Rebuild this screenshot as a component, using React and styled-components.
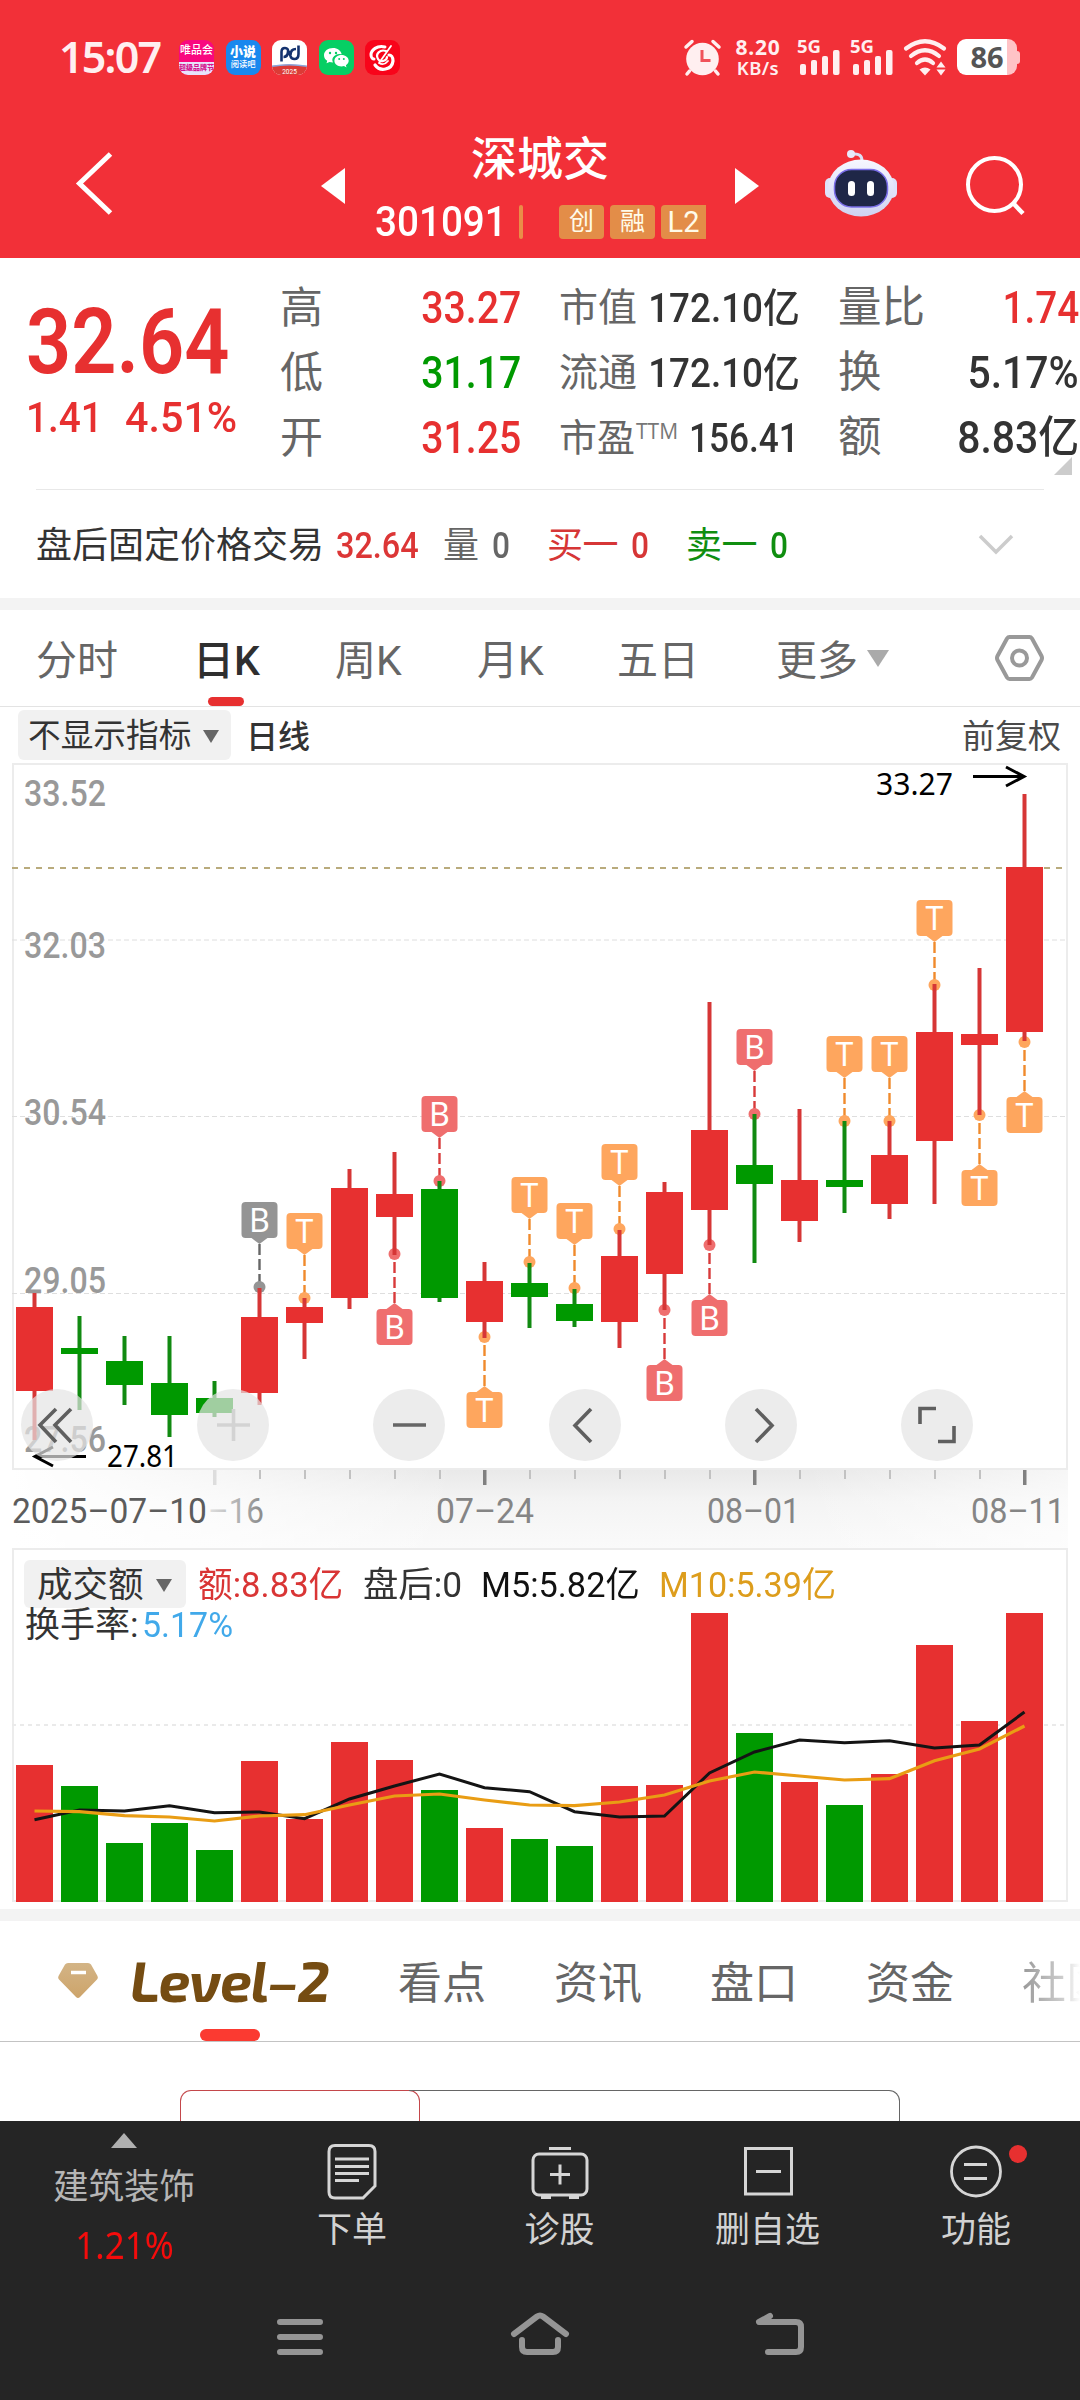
import React from "react";
import styled, { createGlobalStyle } from "styled-components";

const RED = "#e73030";
const GREEN = "#009900";

const GlobalStyle = createGlobalStyle`
  * {
    box-sizing: border-box;
  }
  body {
    margin: 0;
    background: #fff;
    font-family: Roboto, "Noto Sans CJK SC", sans-serif;
    color: #333;
  }
  svg {
    display: block;
    flex: none;
    overflow: visible;
  }
`;

const Screen = styled.div`
  width: 1080px;
  height: 2400px;
  display: flex;
  flex-direction: column;
  overflow: hidden;
  background: #fff;
`;

/* fixed-width slot, the text in it is condensed from one edge */
const Slot = styled.div`
  display: flex;
  flex: none;
  justify-content: ${({ $right }) => ($right ? "flex-end" : "flex-start")};
  width: ${({ $w }) => ($w ? `${$w}px` : "auto")};
  margin-left: ${({ $ml }) => $ml || 0}px;
`;

const Label = styled.span`
  font-size: ${({ $size }) => $size || 36}px;
  font-weight: ${({ $weight }) => $weight || 400};
  color: ${({ $color }) => $color || "#333"};
  line-height: 1.2;
  letter-spacing: ${({ $ls }) => $ls || 0}px;
  white-space: nowrap;
`;

const Num = styled(Label)`
  display: inline-block;
  transform: scaleX(${({ $k }) => $k || 0.88});
  transform-origin: ${({ $right }) => ($right ? "right" : "left")} center;
`;

/* ---------- header ---------- */

const Header = styled.header`
  height: 258px;
  flex: none;
  background: #f23038;
  color: #fff;
`;

const StatusBar = styled.div`
  height: 114px;
  display: flex;
  align-items: center;
  padding: 0 63px 0 59px;
`;

const Clock = styled.div`
  width: 120px;
  font: 600 43px/50px "Noto Sans", sans-serif;
  letter-spacing: -1.8px;
  color: #ffeff0;
`;

const AppIcons = styled.div`
  display: flex;
  gap: 11.6px;
  flex: 1;
`;

const AppIcon = styled.div`
  width: 35px;
  height: 35px;
  border-radius: 9px;
  overflow: hidden;
  background: ${({ $bg }) => $bg};
  display: flex;
  flex-direction: column;
  align-items: center;
  justify-content: center;
  color: #fff;
`;

const IconLine = styled.span`
  font-size: ${({ $size }) => $size}px;
  line-height: ${({ $lh }) => $lh}px;
  font-weight: ${({ $weight }) => $weight || 400};
  color: ${({ $color }) => $color || "#fff"};
  background: ${({ $bg }) => $bg || "none"};
  width: 100%;
  text-align: center;
  white-space: nowrap;
`;

const Speed = styled.div`
  width: 50px;
  margin: 0 14px 0 12px;
  display: flex;
  flex-direction: column;
  align-items: center;
  font: 700 21px/21px "Noto Sans", sans-serif;
  color: #ffeff0;
  letter-spacing: 0.8px;
`;

const SpeedUnit = styled.span`
  font-size: 18.5px;
  line-height: 20px;
  font-weight: 600;
  letter-spacing: 0.4px;
`;

const Battery = styled.div`
  position: relative;
  width: 60px;
  height: 36px;
  margin-left: 9px;
  border-radius: 9px;
  background: linear-gradient(to right, #fff 50px, #ffc3c6 50px);
  font: 700 29px/36px "Noto Sans", sans-serif;
  color: #555;
  text-align: center;
  &:after {
    content: "";
    position: absolute;
    right: -3px;
    top: 12px;
    width: 3px;
    height: 13px;
    border-radius: 0 3px 3px 0;
    background: #ffc3c6;
  }
`;

const NavBar = styled.div`
  height: 144px;
  display: grid;
  grid-template-columns: 321px 24px 390px 24px 66px 72px 69px 1fr;
  align-items: center;
`;

const TitleBlock = styled.div`
  display: flex;
  flex-direction: column;
  align-items: center;
  height: 144px;
  padding-top: 17px;
`;

const Title = styled.div`
  font-size: 46px;
  font-weight: 500;
  line-height: 56px;
`;

const CodeRow = styled.div`
  display: flex;
  align-items: center;
  width: 100%;
  height: 34px;
  margin-top: 18px;
  padding-left: 30px;
`;

const CodeMark = styled.i`
  width: 4px;
  height: 34px;
  border-radius: 2px;
  background: #ea8d48;
  margin-right: 36px;
`;

const Badge = styled.span`
  width: 45px;
  height: 34px;
  margin-right: 6px;
  border-radius: ${({ $cut }) => ($cut ? "4px 0 0 4px" : "4px")};
  background: #e38d48;
  color: #fffbe9;
  font-size: ${({ $size }) => $size || 25}px;
  line-height: 34px;
  text-align: center;
`;

/* ---------- quote ---------- */

const Quote = styled.section`
  position: relative;
  display: flex;
  height: 231px;
  flex: none;
`;

const PriceBlock = styled.div`
  width: 280px;
  flex: none;
  padding: 40px 0 0 26px;
`;

const Price = styled.div`
  height: 90px;
  display: flex;
  align-items: center;
`;

const Change = styled.div`
  height: 60px;
  display: flex;
  align-items: center;
`;

const StatColumn = styled.div`
  width: 241px;
  margin-right: 38px;
  flex: none;
  padding-top: 18px;
`;

const StatRow = styled.div`
  height: 65px;
  display: flex;
  align-items: center;
  justify-content: space-between;
`;

const Sup = styled.span`
  font: 400 21px/20px "Open Sans", sans-serif;
  color: #777;
  margin: 5px 0 0 1px;
`;

const Corner = styled.i`
  position: absolute;
  right: 8px;
  bottom: 14px;
  border-bottom: 18px solid #ccc;
  border-left: 18px solid transparent;
`;

const AfterHours = styled.div`
  height: 109px;
  flex: none;
  display: flex;
  align-items: center;
  margin: 0 36px;
  padding-top: 6px;
  border-top: 1px solid #e8e8e8;
  width: 1008px;
`;

const Band = styled.div`
  height: 12px;
  flex: none;
  background: #f3f3f3;
`;

/* ---------- period tabs ---------- */

const Tabs = styled.nav`
  height: 97px;
  flex: none;
  display: flex;
  align-items: center;
  padding: 0 36px;
  border-bottom: 1px solid #e3e3e3;
`;

const Tab = styled.div`
  position: relative;
  width: ${({ $w }) => $w}px;
  height: 96px;
  padding-top: 3px;
  font-size: 41px;
  line-height: 96px;
  white-space: nowrap;
  color: ${({ $active }) => ($active ? "#2f2f2f" : "#666")};
  font-weight: ${({ $active }) => ($active ? 500 : 400)};
  &:after {
    content: "";
    display: ${({ $active }) => ($active ? "block" : "none")};
    position: absolute;
    left: 15px;
    bottom: 0;
    width: 36px;
    height: 9px;
    border-radius: 5px;
    background: ${RED};
  }
`;

const Caret = styled.i`
  flex: none;
  border-top: ${({ $h }) => $h}px solid ${({ $color }) => $color || "#666"};
  border-left: ${({ $h }) => $h * 0.68}px solid transparent;
  border-right: ${({ $h }) => $h * 0.68}px solid transparent;
`;

const More = styled.div`
  display: flex;
  align-items: center;
  flex: 1;
`;

const IndicatorRow = styled.div`
  height: 56px;
  flex: none;
  display: flex;
  align-items: center;
  padding: 0 19px 0 18px;
`;

const Pill = styled.div`
  display: flex;
  align-items: center;
  justify-content: space-between;
  width: ${({ $w }) => $w}px;
  height: ${({ $h }) => $h}px;
  padding: 3px ${({ $pr }) => $pr}px 0 ${({ $pl }) => $pl}px;
  border-radius: 6px;
  background: #f1f1f1;
`;

const RowText = styled(Label)`
  padding-top: 4px;
`;

const Spacer = styled.div`
  flex: 1;
`;

/* ---------- charts ---------- */

const KlinePanel = styled.section`
  position: relative;
  height: 785px;
  flex: none;
`;

const Controls = styled.div`
  position: absolute;
  left: 21px;
  top: 626px;
  display: flex;
  gap: 104px;
`;

const RoundButton = styled.div`
  width: 72px;
  height: 72px;
  border-radius: 50%;
  background: rgba(228, 228, 228, 0.7);
`;

const VolumePanel = styled.section`
  position: relative;
  height: 361px;
  flex: none;
`;

const Legend = styled.div`
  position: absolute;
  left: 24px;
  top: 12px;
`;

const LegendRow = styled.div`
  display: flex;
  align-items: center;
  height: ${({ $h }) => $h}px;
`;

const LegendItems = styled.div`
  display: flex;
  padding-top: 3px;
`;

/* ---------- lower tabs ---------- */

const InfoTabs = styled.nav`
  height: 121px;
  flex: none;
  display: flex;
  align-items: center;
  padding-left: 57px;
  border-bottom: 1px solid #c3c3c3;
  overflow: hidden;
`;

const LevelTab = styled.div`
  position: relative;
  width: 268px;
  flex: none;
  height: 120px;
  margin-left: 31px;
  padding-bottom: 5px;
  display: flex;
  align-items: center;
  &:after {
    content: "";
    position: absolute;
    left: 70px;
    bottom: 0;
    width: 60px;
    height: 12px;
    border-radius: 6px;
    background: #fb3a31;
  }
`;

const LevelText = styled.span`
  display: inline-block;
  font: italic 700 57px/70px "Exo 2", Inter, sans-serif;
  letter-spacing: -1px;
  color: #754c12;
  transform: scaleX(0.985);
  transform-origin: left center;
  white-space: nowrap;
`;

const InfoTab = styled.div`
  width: 156px;
  flex: none;
  padding-top: 5px;
  font-size: 44px;
  line-height: 60px;
  color: #666;
  white-space: nowrap;
`;

const FadingTab = styled(InfoTab)`
  width: 92px;
  background: linear-gradient(to right, #999 0, #ccc 40px, #fff 58px);
  background-clip: text;
  -webkit-background-clip: text;
  color: transparent;
`;

const Segments = styled.div`
  display: flex;
  height: 31px;
  flex: none;
  margin: 48px 180px 0;
`;

const Segment = styled.div`
  width: ${({ $active }) => ($active ? 240 : 480)}px;
  border: 1px solid ${({ $active }) => ($active ? "#c4474b" : "#666")};
  border-bottom: none;
  border-left-width: ${({ $active }) => ($active ? 1 : 0)}px;
  border-radius: ${({ $active }) => ($active ? "11px 11px 0 0" : "0 11px 0 0")};
  margin-left: ${({ $active }) => ($active ? 0 : -11)}px;
  flex-grow: ${({ $active }) => ($active ? 0 : 1)};
`;

/* ---------- bottom ---------- */

const Footer = styled.footer`
  height: 279px;
  flex: none;
  background: #252525;
`;

const Actions = styled.div`
  height: 158px;
  display: grid;
  grid-template-columns: 248px 208px 207px 209px 208px;
`;

const Action = styled.div`
  position: relative;
  display: flex;
  flex-direction: column;
  align-items: center;
  padding-top: 20px;
  font-size: 35px;
  line-height: 40px;
  color: #d2d2d2;
`;

const ActionLabel = styled.span`
  margin-top: 8px;
`;

const Sector = styled.div`
  display: flex;
  flex-direction: column;
  align-items: center;
  padding-top: 12px;
`;

const SectorArrow = styled.i`
  border-bottom: 15px solid #b0b0b0;
  border-left: 13.5px solid transparent;
  border-right: 13.5px solid transparent;
`;

const SectorName = styled.div`
  margin-top: 19px;
  font-size: 35.5px;
  line-height: 40px;
  color: #b5b5b5;
`;

const SectorChange = styled.div`
  margin-top: 16px;
  font: 400 38px/42px "Noto Sans", sans-serif;
  color: #f40c0c;
  transform: scaleX(0.92);
`;

const Dot = styled.i`
  position: absolute;
  left: 137px;
  top: 24px;
  width: 18px;
  height: 18px;
  border-radius: 50%;
  background: ${RED};
`;

const SystemNav = styled.div`
  display: flex;
  justify-content: center;
  align-items: center;
  gap: 180px;
  height: 108px;
`;

// body top, body bottom, high, low, up
const candles = [
  [1307, 1391, 1293, 1440, 1],
  [1348, 1354, 1316, 1410, 0],
  [1361, 1385, 1336, 1405, 0],
  [1383, 1415, 1336, 1437, 0],
  [1398, 1413, 1381, 1417, 0],
  [1317, 1393, 1288, 1405, 1],
  [1307, 1323, 1298, 1359, 1],
  [1188, 1298, 1169, 1309, 1],
  [1194, 1217, 1152, 1255, 1],
  [1189, 1298, 1181, 1302, 0],
  [1281, 1322, 1262, 1338, 1],
  [1283, 1297, 1263, 1328, 0],
  [1304, 1321, 1289, 1327, 0],
  [1256, 1322, 1230, 1348, 1],
  [1192, 1274, 1182, 1310, 1],
  [1130, 1210, 1002, 1245, 1],
  [1165, 1184, 1114, 1263, 0],
  [1180, 1221, 1109, 1242, 1],
  [1180, 1187, 1121, 1213, 0],
  [1155, 1204, 1121, 1219, 1],
  [1032, 1141, 984, 1204, 1],
  [1034, 1045, 968, 1115, 1],
  [867, 1032, 794, 1041, 1],
];

const tones = {
  grey: ["#949494", "#666"],
  red: ["#ef6e6e", "#d83a3a"],
  orange: ["#fea65e", "#f08a2c"],
};

// candle index, letter, tone, anchor y, side
const marks = [
  [5, "B", "grey", 1287, "up"],
  [6, "T", "orange", 1298, "up"],
  [8, "B", "red", 1254, "down"],
  [9, "B", "red", 1181, "up"],
  [10, "T", "orange", 1337, "down"],
  [11, "T", "orange", 1262, "up"],
  [12, "T", "orange", 1288, "up"],
  [13, "T", "orange", 1229, "up"],
  [14, "B", "red", 1310, "down"],
  [15, "B", "red", 1245, "down"],
  [16, "B", "red", 1114, "up"],
  [18, "T", "orange", 1121, "up"],
  [19, "T", "orange", 1121, "up"],
  [20, "T", "orange", 985, "up"],
  [21, "T", "orange", 1115, "down"],
  [22, "T", "orange", 1042, "down"],
];

const prices = [
  ["33.52", 806],
  ["32.03", 957.5],
  ["30.54", 1125],
  ["29.05", 1293],
  ["27.56", 1452],
];

const dates = [
  ["07–24", 436, 98],
  ["08–01", 707, 93],
  ["08–11", 971, 94],
];

const volumes = [
  1765, 1786, 1843, 1823, 1850, 1761, 1819, 1742, 1760, 1790, 1828, 1839, 1846,
  1786, 1785, 1613, 1733, 1782, 1805, 1774, 1645, 1721, 1613,
];
const ma5 = [
  1819.7, 1810, 1811, 1805.7, 1812.7, 1812, 1818.7, 1799, 1786, 1774, 1787.7,
  1791.7, 1811.7, 1817, 1816, 1773, 1752, 1740, 1742.7, 1740.7, 1748, 1745, 1712,
];
const ma10 = [
  1811, 1811.7, 1815.7, 1817, 1821, 1816, 1814.7, 1805, 1796, 1794, 1800, 1805,
  1805.7, 1802, 1795, 1781, 1772, 1776, 1780, 1778.7, 1760.7, 1749, 1726,
];

const cx = (i) => 34.5 + 45 * i;
const points = (ys) => ys.map((y, i) => `${cx(i)},${y}`).join(" ");

const Mark = ({ index, letter, tone, y, side }) => {
  const [fill, line] = tones[tone];
  const x = cx(index);
  const up = side === "up";
  const top = up ? y - 85 : y + 55;
  const edge = up ? top + 36 : top;
  const tip = up ? edge + 6 : edge - 6;
  return (
    <g>
      <line x1={x} x2={x} y1={tip} y2={y} stroke={line} strokeWidth="2.4" strokeDasharray="11 4" />
      <rect x={x - 18} y={top} width="36" height="36" rx="4" fill={fill} />
      <path d={`M${x - 8} ${edge}L${x} ${tip}L${x + 8} ${edge}Z`} fill={fill} />
      <circle cx={x} cy={y} r="6" fill={fill} />
      <text
        x={x}
        y={top + 30}
        fill="#fff"
        fontSize="32"
        fontFamily="Noto Sans"
        textAnchor="middle"
      >
        {letter}
      </text>
    </g>
  );
};

const Kline = () => (
  <svg width="1080" height="785" viewBox="0 763 1080 785">
    <defs>
      <linearGradient id="axisY" x1="0" x2="0" y1="0" y2="1">
        <stop offset="0" stopColor="#e9e9e9" />
        <stop offset="0.4" stopColor="#f4f4f4" />
        <stop offset="1" stopColor="#fafafa" />
      </linearGradient>
      <linearGradient id="axisX">
        <stop offset="0" stopColor="#fff" />
        <stop offset="0.2" stopColor="#fff" stopOpacity="0.6" />
        <stop offset="0.42" stopColor="#fff" stopOpacity="0" />
        <stop offset="0.75" stopColor="#fff" stopOpacity="0" />
        <stop offset="1" stopColor="#fff" stopOpacity="0.6" />
      </linearGradient>
      <linearGradient id="dateFade" gradientUnits="userSpaceOnUse" x1="200" x2="262" y1="0" y2="0">
        <stop offset="0" stopColor="#eee" />
        <stop offset="1" stopColor="#8c8c8c" />
      </linearGradient>
    </defs>
    <rect x="12" y="1470" width="1056" height="78" fill="url(#axisY)" />
    <rect x="12" y="1470" width="1056" height="78" fill="url(#axisX)" />
    <rect x="13" y="764" width="1054" height="705" fill="none" stroke="#ececec" strokeWidth="2" />
    {[940, 1116.5, 1293.5].map((y) => (
      <line key={y} x1="12" x2="1066" y1={y} y2={y} stroke="#dedede" strokeDasharray="5 3" />
    ))}
    <line x1="12" x2="1064" y1="868" y2="868" stroke="#b9ab7c" strokeWidth="2" strokeDasharray="6 6" />
    {prices.map(([text, y]) => (
      <text
        key={text}
        x="24"
        y={y}
        fill="#999"
        fontSize="36"
        fontWeight="500"
        textLength="82"
        lengthAdjust="spacingAndGlyphs"
      >
        {text}
      </text>
    ))}
    {marks.map(([index, letter, tone, y, side]) => (
      <Mark key={index} index={index} letter={letter} tone={tone} y={y} side={side} />
    ))}
    {candles.map(([top, bottom, high, low, up], i) => (
      <g key={i} fill={up ? RED : GREEN}>
        <rect x={cx(i) - 2} y={high} width="4" height={low - high} fill={up ? "#d63636" : "#118a11"} />
        <rect x={cx(i) - 18.5} y={top} width="37" height={bottom - top} />
      </g>
    ))}
    <g fontFamily="Noto Sans" fontSize="31" fill="#000">
      <text x="876" y="795" textLength="77" lengthAdjust="spacingAndGlyphs">
        33.27
      </text>
      <text x="107" y="1467" textLength="71" lengthAdjust="spacingAndGlyphs">
        27.81
      </text>
    </g>
    <g stroke="#000" strokeWidth="3" fill="none">
      <path d="M973 776.5H1024M1006 767L1024 776.5L1006 786" />
      <path d="M86 1456.5H35M53 1447L35 1456.5L53 1466" />
    </g>
    {candles.map((c, i) => {
      if (i < 4) return null;
      const major = (i - 4) % 6 === 0;
      return (
        <rect
          key={i}
          x={cx(i) - (major ? 1.5 : 0.5)}
          y="1470"
          width={major ? 3.5 : 2}
          height={major ? 15 : 9}
          fill={i === 4 ? "#ddd" : major ? "#808080" : "#c2c2c2"}
        />
      );
    })}
    <g fontSize="35" fill="#858585">
      <text x="208" y="1523" fill="url(#dateFade)" textLength="56" lengthAdjust="spacingAndGlyphs">
        –16
      </text>
      {dates.map(([text, x, w]) => (
        <text key={text} x={x} y="1523" textLength={w} lengthAdjust="spacingAndGlyphs">
          {text}
        </text>
      ))}
      <text
        x="12"
        y="1523"
        fill="#5c5c5c"
        textLength="195"
        lengthAdjust="spacingAndGlyphs"
      >
        2025–07–10
      </text>
    </g>
  </svg>
);

const buttonIcons = [
  ["M35 20L19 36L35 53M50 20L34 36L50 53", "#5f5f5f"],
  ["M20 36H53M36.5 20V52", "#d3d3d3"],
  ["M20 36H53", "#666"],
  ["M42 20L26 36.5L42 53", "#5f5f5f"],
  ["M31 20L47 36.5L31 53", "#5f5f5f"],
  ["M19 35V19.5H35M37 52.5H53V37", "#5f5f5f"],
];

const Volume = () => (
  <svg width="1080" height="361" viewBox="0 1548 1080 361">
    <rect x="13" y="1549" width="1054" height="352" fill="none" stroke="#ececec" strokeWidth="2" />
    <line x1="12" x2="1066" y1="1725" y2="1725" stroke="#eaeaea" strokeWidth="2" strokeDasharray="4 4" />
    {volumes.map((y, i) => (
      <rect
        key={i}
        x={cx(i) - 18.5}
        y={y}
        width="37"
        height={1902 - y}
        fill={candles[i][4] ? RED : GREEN}
      />
    ))}
    <polyline points={points(ma5)} fill="none" stroke="#141414" strokeWidth="3" />
    <polyline points={points(ma10)} fill="none" stroke="#e99d14" strokeWidth="3.2" />
  </svg>
);

const Signal = () => (
  <svg width="53" height="36" viewBox="0 0 53 36" fill="#ffeff0">
    <text x="0" y="14" fontFamily="Noto Sans" fontWeight="700" fontSize="18.5">
      5G
    </text>
    <rect x="3" y="25" width="6" height="11" rx="2" />
    <rect x="14" y="21" width="6" height="15" rx="2" />
    <rect x="25" y="17" width="6" height="19" rx="2" />
    <rect x="36" y="11" width="6.5" height="25" rx="2" />
  </svg>
);

const App = () => (
  <>
    <GlobalStyle />
    <Screen>
      <Header>
        <StatusBar>
          <Clock>15:07</Clock>
          <AppIcons>
            <AppIcon $bg="#f9087f">
              <IconLine $size={11} $lh={22} $weight={500}>唯品会</IconLine>
              <IconLine $size={7} $lh={13} $weight={900} $bg="#e7e3fb" $color="#d5148f">超级品牌节</IconLine>
            </AppIcon>
            <AppIcon $bg="#1988ee">
              <IconLine $size={13} $lh={15} $weight={900}>小说</IconLine>
              <IconLine $size={8.3} $lh={11} $weight={500}>阅读吧</IconLine>
            </AppIcon>
            <AppIcon $bg="#fff">
              <svg width="35" height="35" viewBox="0 0 35 35">
                <path d="M0 26Q17 23 35 26V35H0Z" fill="#dc3b36" />
                <path d="M0 25.5Q17 22.5 35 25.5V27Q17 24 0 27Z" fill="#8aa7dd" />
                <path
                  d="M9.500 21.500V12Q9.500 8 13 8Q16.500 8 16 12Q15.500 17 11.500 17M26.500 5.500V14Q26.500 19 22.500 19Q19 19 18.500 16L16.500 11M18.500 15Q18.500 9 24 9"
                  fill="none"
                  stroke="#14326e"
                  strokeWidth="2.600"
                />
                <text x="17.5" y="33.5" fontSize="6.5" fill="#fff" textAnchor="middle">
                  2025
                </text>
              </svg>
            </AppIcon>
            <AppIcon $bg="#06cf64">
              <svg width="35" height="35" viewBox="0 0 35 35" fill="#fff">
                <path d="M14 8C8.8 8 5 11.200 5 15.300C5 17.600 6.200 19.500 8.200 20.800L7.500 23.300L10.500 21.900C11.600 22.200 12.700 22.400 14 22.400A7 6 0 0 1 22.700 14.300C22 10.600 18.400 8 14 8Z" />
                <path d="M22.500 15C18.500 15 15.400 17.600 15.400 20.800C15.400 24 18.500 26.500 22.500 26.500C23.400 26.500 24.200 26.400 25 26.100L27.500 27.400L26.900 25.200C28.600 24.200 29.700 22.600 29.700 20.800C29.700 17.600 26.500 15 22.500 15Z" />
                <g fill="#06cf64">
                  <circle cx="11" cy="13" r="1.200" />
                  <circle cx="17" cy="13" r="1.200" />
                  <circle cx="20.200" cy="19" r="1" />
                  <circle cx="24.800" cy="19" r="1" />
                </g>
              </svg>
            </AppIcon>
            <AppIcon $bg="#f8041a">
              <svg width="35" height="35" viewBox="0 0 35 35" fill="none" stroke="#fff" strokeLinecap="round">
                <path d="M20 7C12 5 6 10 6 15C6 18 8 19 9 19" strokeWidth="3" />
                <path d="M10 25C15 32 27 30 28 21C28 17 26 15 24 15" strokeWidth="3.200" />
                <path d="M21 11C15 9 10 14 13 19C15 23 22 21 22 17" strokeWidth="2.200" />
                <path d="M26 6L14 23M14 23Q19 26 23 21" strokeWidth="1.800" />
              </svg>
            </AppIcon>
          </AppIcons>
          <svg width="37" height="37" viewBox="0 0 37 37">
            <circle cx="18.500" cy="20" r="16.300" fill="#ffeff0" />
            <path d="M2 8L8 2.500M35 8L29 2.500M5.500 32L3 35M31.500 32L34 35" stroke="#ffeff0" strokeWidth="3.500" strokeLinecap="round" />
            <path d="M18 11V21.500H26.500" stroke="#f0525a" strokeWidth="3" fill="none" />
          </svg>
          <Speed>
            8.20
            <SpeedUnit>KB/s</SpeedUnit>
          </Speed>
          <Signal />
          <Signal />
          <svg width="45" height="37" viewBox="0 0 45 37" fill="none" stroke="#ffeff0" strokeLinecap="round">
            <path d="M3 9.500Q22 -5 41 9.500" strokeWidth="4.200" />
            <path d="M8 17Q22 5.500 36 17" strokeWidth="4.200" />
            <path d="M14 24Q22 17 30 24" strokeWidth="4.200" />
            <path d="M16.500 30.500Q22 26.500 27.500 30.500L22 36.500Z" fill="#ffeff0" stroke="none" />
            <path d="M38 22.500L42.500 28.500H33.500ZM38 36.500L42.500 30.500H33.500Z" fill="#ffeff0" stroke="none" />
          </svg>
          <Battery>86</Battery>
        </StatusBar>
        <NavBar>
          <svg width="120" height="72" viewBox="0 150 120 72">
            <path d="M110.500 154L79.500 183.500L110.500 213" fill="none" stroke="#fff" strokeWidth="5" />
          </svg>
          <svg width="24" height="36" viewBox="0 0 24 36" fill="#fff">
            <path d="M24 0V36L0 18Z" />
          </svg>
          <TitleBlock>
            <Title>深城交</Title>
            <CodeRow>
              <Slot $w={144}>
                <Num $size={42} $weight={500} $color="#fff" $k={0.92}>301091</Num>
              </Slot>
              <CodeMark />
              <Badge>创</Badge>
              <Badge>融</Badge>
              <Badge $size={29} $cut>L2</Badge>
            </CodeRow>
          </TitleBlock>
          <svg width="24" height="36" viewBox="0 0 24 36" fill="#fff">
            <path d="M0 0V36L24 18Z" />
          </svg>
          <span />
          <svg width="72" height="76" viewBox="0 4 72 76">
            <defs>
              <linearGradient id="shell" x1="0" x2="0" y1="0" y2="1">
                <stop offset="0" stopColor="#f6f7ff" />
                <stop offset="1" stopColor="#cfd2f2" />
              </linearGradient>
            </defs>
            <path d="M28 10Q37 9 37 17" fill="none" stroke="#dcdff5" strokeWidth="3" />
            <circle cx="26" cy="10" r="4" fill="#e8eafb" />
            <rect x="0" y="34" width="10" height="20" rx="5" fill="#dfe2fa" />
            <rect x="62" y="34" width="10" height="20" rx="5" fill="#dfe2fa" />
            <ellipse cx="36" cy="44" rx="33" ry="28.500" fill="url(#shell)" />
            <rect x="9.500" y="25.500" width="53" height="37.500" rx="17" fill="#1f2747" stroke="#7a6ee8" strokeWidth="1.500" />
            <rect x="23" y="37" width="7" height="15" rx="3.500" fill="#fff" />
            <rect x="42" y="37" width="7" height="15" rx="3.500" fill="#fff" />
          </svg>
          <span />
          <svg width="62" height="64" viewBox="0 0 62 64" fill="none" stroke="#fff" strokeWidth="4">
            <circle cx="28.500" cy="30.500" r="26.500" />
            <path d="M47 49L57 59.500" strokeWidth="4.500" />
          </svg>
        </NavBar>
      </Header>

      <Quote>
        <PriceBlock>
          <Price>
            <Num $size={90} $weight={600} $color={RED} $k={0.88}>32.64</Num>
          </Price>
          <Change>
            <Slot $w={99}>
              <Num $size={43} $weight={500} $color={RED} $k={0.9}>1.41</Num>
            </Slot>
            <Num $size={43} $weight={500} $color={RED} $k={0.96}>4.51%</Num>
          </Change>
        </PriceBlock>
        <StatColumn>
          {[
            ["高", "33.27", RED],
            ["低", "31.17", GREEN],
            ["开", "31.25", RED],
          ].map(([name, value, color]) => (
            <StatRow key={name}>
              <Label $size={43} $color="#666">{name}</Label>
              <Num $size={44} $weight={500} $color={color} $k={0.89} $right>{value}</Num>
            </StatRow>
          ))}
        </StatColumn>
        <StatColumn>
          {["市值", "流通"].map((name) => (
            <StatRow key={name}>
              <Slot $w={80}>
                <Label $size={39} $color="#666">{name}</Label>
              </Slot>
              <Slot $w={161} $right>
                <Num $size={40} $weight={500} $k={0.92} $right>172.10亿</Num>
              </Slot>
            </StatRow>
          ))}
          <StatRow>
            <Slot $w={120}>
              <Label $size={38} $color="#666">市盈</Label>
              <Sup>TTM</Sup>
            </Slot>
            <Slot $w={119} $right>
              <Num $size={40} $weight={500} $right>156.41</Num>
            </Slot>
            <span />
          </StatRow>
        </StatColumn>
        <StatColumn>
          {[
            ["量比", "1.74", RED, 0.88],
            ["换", "5.17%", "#333", 0.93],
            ["额", "8.83亿", "#333", 0.93],
          ].map(([name, value, color, k]) => (
            <StatRow key={name}>
              <Label $size={43.5} $color="#666">{name}</Label>
              <Num $size={44} $weight={500} $color={color} $k={k} $right>{value}</Num>
            </StatRow>
          ))}
        </StatColumn>
        <Corner />
      </Quote>
      <AfterHours>
        <Slot $w={300}>
          <Label $size={36}>盘后固定价格交易</Label>
        </Slot>
        <Slot $w={107}>
          <Num $weight={500} $color="#dc3636" $k={0.9}>32.64</Num>
        </Slot>
        <Slot $w={49}>
          <Label $color="#666">量</Label>
        </Slot>
        <Slot $w={55}>
          <Num $weight={500} $color="#666">0</Num>
        </Slot>
        <Slot $w={84}>
          <Label $color="#d63636" $ls={-0.5}>买一</Label>
        </Slot>
        <Slot $w={55}>
          <Num $weight={500} $color="#d63636">0</Num>
        </Slot>
        <Slot $w={84}>
          <Label $color="#108e10" $ls={-0.5}>卖一</Label>
        </Slot>
        <Num $weight={500} $color="#108e10">0</Num>
        <Spacer />
        <svg width="70" height="24" viewBox="0 3 70 24">
          <path d="M6 4L22 20L38 4" fill="none" stroke="#ccc" strokeWidth="3.500" />
        </svg>
      </AfterHours>
      <Band />

      <Tabs>
        <Tab $w={157}>分时</Tab>
        <Tab $w={142} $active>日K</Tab>
        <Tab $w={142}>周K</Tab>
        <Tab $w={140}>月K</Tab>
        <Tab $w={159}>五日</Tab>
        <More>
          <Tab $w={91}>更多</Tab>
          <Caret $h={17} $color="#aaa" />
        </More>
        <svg width="50" height="48" viewBox="0 0 50 48" fill="none" stroke="#999" strokeWidth="4">
          <path d="M15.500 3H35.500Q37 3 38 4.500L47.500 22Q48.500 24 47.500 26L38 43.500Q37 45 35.500 45H15.500Q14 45 13 43.500L3.500 26Q2.500 24 3.500 22L13 4.500Q14 3 15.500 3Z" />
          <circle cx="25.500" cy="24" r="7.500" />
        </svg>
      </Tabs>
      <IndicatorRow>
        <Pill $w={213} $h={50} $pl={10} $pr={12}>
          <Label $size={32.7}>不显示指标</Label>
          <Caret $h={13} />
        </Pill>
        <Slot $ml={15}>
          <RowText $size={32} $weight={500}>日线</RowText>
        </Slot>
        <Spacer />
        <RowText $size={33} $color="#4a4a4a">前复权</RowText>
      </IndicatorRow>

      <KlinePanel>
        <Kline />
        <Controls>
          {buttonIcons.map(([d, color]) => (
            <RoundButton key={d}>
              <svg width="72" height="72" viewBox="0 0 72 72">
                <path d={d} fill="none" stroke={color} strokeWidth="3.600" />
              </svg>
            </RoundButton>
          ))}
        </Controls>
      </KlinePanel>

      <VolumePanel>
        <Volume />
        <Legend>
          <LegendRow $h={48}>
            <Pill $w={162} $h={48} $pl={13} $pr={14}>
              <Label $size={35.5}>成交额</Label>
              <Caret $h={13} />
            </Pill>
            <LegendItems>
              <Slot $w={165} $ml={12}>
                <Num $size={35} $color="#d93535" $k={0.99}>额:8.83亿</Num>
              </Slot>
              <Slot $w={118}>
                <Num $size={35} $k={1.01}>盘后:0</Num>
              </Slot>
              <Slot $w={178}>
                <Num $size={35} $color="#111" $k={0.98}>M5:5.82亿</Num>
              </Slot>
              <Num $size={35} $color="#dd9d1c" $k={0.975}>M10:5.39亿</Num>
            </LegendItems>
          </LegendRow>
          <LegendRow $h={36}>
            <Slot $w={117} $ml={1}>
              <Label $size={35}>换手率:</Label>
            </Slot>
            <Num $size={35} $color="#41a9ea" $k={0.97}>5.17%</Num>
          </LegendRow>
        </Legend>
      </VolumePanel>
      <Band />

      <InfoTabs>
        <svg width="42" height="38" viewBox="0 0 42 38">
          <defs>
            <linearGradient id="gem" x1="0" x2="0" y1="0" y2="1">
              <stop offset="0" stopColor="#d3b486" />
              <stop offset="1" stopColor="#cda46a" />
            </linearGradient>
          </defs>
          <path d="M11 1H31Q33 1 34 2.500L40.500 14Q41.500 16 40 17.500L23 35Q21 37 19 35L2 17.500Q0.500 16 1.500 14L8 2.500Q9 1 11 1Z" fill="url(#gem)" />
          <path d="M14 10.500H29" stroke="#fff" strokeWidth="3.500" />
        </svg>
        <LevelTab>
          <LevelText>Level–2</LevelText>
        </LevelTab>
        <InfoTab>看点</InfoTab>
        <InfoTab>资讯</InfoTab>
        <InfoTab>盘口</InfoTab>
        <InfoTab>资金</InfoTab>
        <FadingTab>社区</FadingTab>
      </InfoTabs>
      <Segments>
        <Segment $active />
        <Segment />
      </Segments>

      <Footer>
        <Actions>
          <Sector>
            <SectorArrow />
            <SectorName>建筑装饰</SectorName>
            <SectorChange>1.21%</SectorChange>
          </Sector>
          <Action>
            <svg width="52" height="62" viewBox="0 0 52 62" fill="none" stroke="#d6d6d6" strokeWidth="3">
              <path d="M9 4.500H43Q49 4.500 49 10.500V45L37 57H9Q3 57 3 51V10.500Q3 4.500 9 4.500Z" />
              <path d="M9 18H43M9 25.500H43M9 32.500H43M9 39.500H33" />
            </svg>
            <ActionLabel>下单</ActionLabel>
          </Action>
          <Action>
            <svg width="60" height="62" viewBox="0 0 60 62" fill="none" stroke="#d6d6d6" strokeWidth="3">
              <rect x="3" y="13" width="54" height="41" rx="6" />
              <path d="M19 7.500H41M20 33.500H40M30 23.500V43.500" />
              <path d="M11 56H21M39 56H49" strokeWidth="4" />
            </svg>
            <ActionLabel>诊股</ActionLabel>
          </Action>
          <Action>
            <svg width="52" height="62" viewBox="0 0 52 62" fill="none" stroke="#d6d6d6" strokeWidth="3">
              <rect x="3.500" y="7.500" width="46" height="45.500" />
              <path d="M14 30.500H39" />
            </svg>
            <ActionLabel>删自选</ActionLabel>
          </Action>
          <Action>
            <svg width="56" height="62" viewBox="0 0 56 62" fill="none" stroke="#d6d6d6" strokeWidth="2.800">
              <circle cx="28" cy="30.500" r="24.500" />
              <path d="M16 23.500H39M16 37.500H39" />
            </svg>
            <ActionLabel>功能</ActionLabel>
            <Dot />
          </Action>
        </Actions>
        <SystemNav>
          <svg width="60" height="48" viewBox="0 0 60 48" fill="none" stroke="#959595" strokeWidth="6" strokeLinecap="round">
            <path d="M10 13H50M10 28H50M10 43H50" />
          </svg>
          <svg width="60" height="48" viewBox="0 0 60 48" fill="none" stroke="#959595" strokeWidth="6" strokeLinecap="round">
            <path d="M4 25L27 7.500Q30 5.500 33 7.500L56 25" />
            <path d="M12 31V38Q12 43 17 43H43Q48 43 48 38V31" />
          </svg>
          <svg width="60" height="48" viewBox="0 0 60 48" fill="none" stroke="#959595" strokeWidth="6" strokeLinecap="round" strokeLinejoin="round">
            <path d="M20 7L9 13H46Q51 13 51 18V38Q51 43 46 43H18" />
          </svg>
        </SystemNav>
      </Footer>
    </Screen>
  </>
);

export default App;
